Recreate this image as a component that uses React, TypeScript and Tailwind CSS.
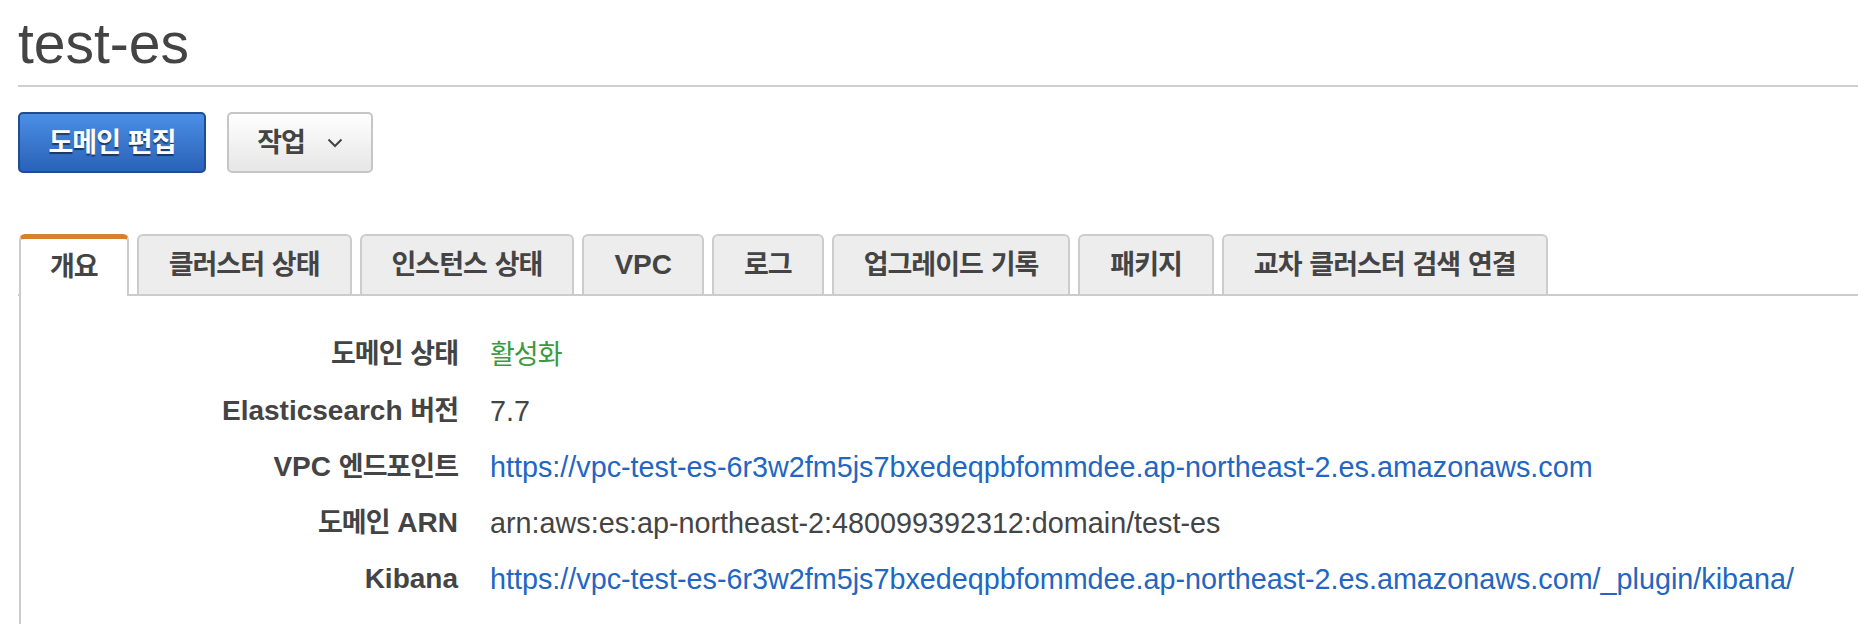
import { Fragment } from "react";

const FONT = "[font-family:'Liberation_Sans','Noto_Sans_CJK_KR',sans-serif]";

// Hangul runs get tighter spacing to mimic the narrow Mac Korean font
function Ko({ text }: { text: string }) {
  const parts = text.split(/([가-힣]+)/);
  return (
    <span>
      {parts.map((part, i) =>
        /[가-힣]/.test(part) ? (
          <span key={i} className="text-[27px] tracking-[-1px]">
            {part}
          </span>
        ) : (
          <Fragment key={i}>{part}</Fragment>
        )
      )}
    </span>
  );
}

const tabs = ["개요", "클러스터 상태", "인스턴스 상태", "VPC", "로그", "업그레이드 기록", "패키지", "교차 클러스터 검색 연결"];

type Row = { label: string; value: string; kind: "green" | "text" | "link" };

const rows: Row[] = [
  { label: "도메인 상태", value: "활성화", kind: "green" },
  { label: "Elasticsearch 버전", value: "7.7", kind: "text" },
  { label: "VPC 엔드포인트", value: "https://vpc-test-es-6r3w2fm5js7bxedeqpbfommdee.ap-northeast-2.es.amazonaws.com", kind: "link" },
  { label: "도메인 ARN", value: "arn:aws:es:ap-northeast-2:480099392312:domain/test-es", kind: "text" },
  { label: "Kibana", value: "https://vpc-test-es-6r3w2fm5js7bxedeqpbfommdee.ap-northeast-2.es.amazonaws.com/_plugin/kibana/", kind: "link" }
];

export default function App() {
  return (
    <div className={`${FONT} min-h-[624px] w-full bg-white pl-[18px] text-[#444]`}>
      <h1 className="pt-[11px] text-[57px] leading-[64px] font-normal text-[#444]">test-es</h1>
      <div className="mt-[10px] h-[2px] bg-[#d0d0d0]" />

      <div className="mt-[25px] flex gap-[21px]">
        <button className="h-[61px] w-[188px] rounded-[5px] border-2 border-[#1f4d93] bg-gradient-to-b from-[#4b8fe6] to-[#2a62b8] text-[28px] font-bold text-white [text-shadow:0_2px_1px_rgba(0,0,0,0.5)]">
          <Ko text="도메인 편집" />
        </button>
        <button className="flex h-[61px] w-[146px] items-center justify-center gap-[22px] rounded-[5px] border-2 border-[#c6c6c6] bg-gradient-to-b from-[#ffffff] to-[#e6e6e6] text-[28px] font-bold text-[#444]">
          <Ko text="작업" />
          <svg width="16" height="10" viewBox="0 0 16 10" aria-hidden>
            <path d="M1.5 1.5 L8 8 L14.5 1.5" fill="none" stroke="#444" strokeWidth="2" />
          </svg>
        </button>
      </div>

      <div className="mt-[61px] flex items-end gap-[8px] border-b-2 border-[#cccccc]">
        {tabs.map((tab, i) =>
          i === 0 ? (
            <div
              key={tab}
              className="-mb-[2px] ml-[1px] flex h-[62px] items-center rounded-t-[6px] border-x-2 border-t-[5px] border-x-[#cccccc] border-t-[#d9802f] bg-white px-[29px] pb-[2px] text-[28px] font-bold text-[#444]"
            >
              <Ko text={tab} />
            </div>
          ) : (
            <div
              key={tab}
              className="flex h-[60px] items-center rounded-t-[6px] border-x-2 border-t-2 border-[#cccccc] bg-[#ededed] px-[30px] text-[28px] font-bold text-[#444]"
            >
              <Ko text={tab} />
            </div>
          )
        )}
      </div>

      <div className="ml-[1px] grid grid-cols-[437px_1fr] gap-x-[32px] border-l-2 border-[#cccccc] pt-[30px] pb-[30px]">
        {rows.map((row) => (
          <Fragment key={row.label}>
            <div className="text-right text-[28px] leading-[56px] font-bold text-[#444]">
              <Ko text={row.label} />
            </div>
            <div
              className={`text-[28.75px] leading-[56px] whitespace-nowrap ${
                row.kind === "green" ? "text-[#3b9a3d]" : row.kind === "link" ? "text-[#2266c2]" : "text-[#444]"
              }`}
            >
              <Ko text={row.value} />
            </div>
          </Fragment>
        ))}
      </div>
    </div>
  );
}
